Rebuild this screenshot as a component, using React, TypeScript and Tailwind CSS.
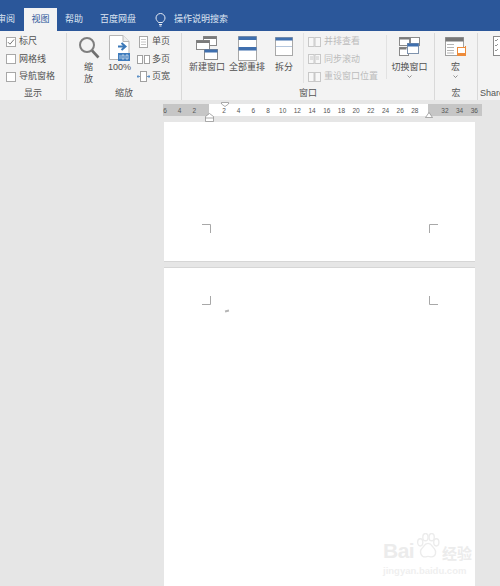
const font = { fontFamily: '"Liberation Sans","Noto Sans CJK SC",sans-serif' };

function Check({ label, checked }: { label: string; checked?: boolean }) {
  return (
    <div className="flex items-center gap-[3px] h-[17.5px]">
      <span className="w-[10px] h-[10px] border border-[#a8a8a8] bg-white flex items-center justify-center">
        {checked && (
          <svg width="8" height="8" viewBox="0 0 8 8" fill="none" stroke="#666" strokeWidth="0.9">
            <path d="M1 4.2 3 6.2 7 1.5" />
          </svg>
        )}
      </span>
      <span className="whitespace-nowrap">{label}</span>
    </div>
  );
}

function Magnifier() {
  return (
    <svg width="22" height="24" viewBox="0 0 22 24" fill="none">
      <circle cx="9" cy="9" r="7" stroke="#7f7f7f" strokeWidth="2" />
      <path d="M14 14.5 20.5 21.5" stroke="#6f6f6f" strokeWidth="2.6" />
    </svg>
  );
}

function Hundred() {
  return (
    <svg width="21" height="27" viewBox="0 0 21 27" fill="none">
      <path d="M.5.5H14L20 6.5V24.5H.5Z" fill="#fff" stroke="#b5b5b5" />
      <path d="M14 .5V6.5H20" fill="#eee" stroke="#b5b5b5" />
      <path d="M9 11.5H15M12.5 8 16.5 11.5 12.5 15" stroke="#3b78b8" strokeWidth="2" />
      <rect x="9" y="18" width="12" height="8" fill="#3f7cbd" />
      <path d="M11 20v4M13 20h2v4h-2zM17 20h2v4h-2z" stroke="#fff" strokeWidth=".6" />
    </svg>
  );
}

function SmallPage() {
  return (
    <svg width="11" height="12" viewBox="0 0 11 12" fill="none" stroke="#a8a8a8">
      <rect x="1.5" y=".5" width="8" height="11" fill="#fff" />
      <path d="M3 3.5h5M3 6h5M3 8.5h5" stroke="#c8c8c8" />
    </svg>
  );
}

function MultiPage() {
  return (
    <svg width="13" height="10" viewBox="0 0 13 10" fill="none" stroke="#a0a0a0">
      <rect x=".5" y="1.5" width="5" height="8" fill="#fff" />
      <rect x="7.5" y="1.5" width="5" height="8" fill="#fff" />
    </svg>
  );
}

function PageWidth() {
  return (
    <svg width="13" height="11" viewBox="0 0 13 11" fill="none">
      <rect x="3.5" y=".5" width="6" height="10" fill="#fff" stroke="#a0a0a0" />
      <path d="M0 5.5h3M10 5.5h3M1.5 4 0 5.5 1.500 7M11.500 4 13 5.500 11.500 7" stroke="#3f7cbd" strokeWidth=".8" />
    </svg>
  );
}

function NewWindow() {
  return (
    <svg width="22" height="24" viewBox="0 0 22 24" fill="none">
      <rect x="7.5" y=".5" width="13" height="9" fill="#fff" stroke="#8a8a8a" />
      <rect x="7.5" y=".5" width="13" height="2.500" fill="#7b7b7b" />
      <rect x=".5" y="4.500" width="13" height="9" fill="#fff" stroke="#8a8a8a" />
      <rect x=".5" y="4.500" width="13" height="2.500" fill="#7b7b7b" />
      <rect x="8.500" y="13.500" width="13" height="10" fill="#fff" stroke="#8a8a8a" />
      <rect x="8.500" y="13.500" width="13" height="3" fill="#3f6fae" />
    </svg>
  );
}

function ArrangeAll() {
  return (
    <svg width="19" height="25" viewBox="0 0 19 25" fill="none">
      <rect x=".5" y=".5" width="18" height="24" fill="#fff" stroke="#a8a8a8" />
      <rect x=".5" y=".5" width="18" height="3.500" fill="#3f6fae" />
      <rect x=".5" y="11" width="18" height="3.500" fill="#3f6fae" />
    </svg>
  );
}

function Split() {
  return (
    <svg width="18" height="19" viewBox="0 0 18 19" fill="none">
      <rect x=".5" y=".5" width="17" height="18" fill="#fff" stroke="#a8a8a8" />
      <rect x=".5" y=".5" width="17" height="3" fill="#3f6fae" />
      <path d="M1 9.500h16" stroke="#b5c7de" />
    </svg>
  );
}

function Faded({ kind }: { kind: number }) {
  return (
    <svg width="13" height="10" viewBox="0 0 13 10" fill="none" stroke="#c8c8c8">
      <rect x=".5" y=".5" width="5.500" height="9" fill="#f7f7f7" />
      <rect x="7" y=".5" width="5.500" height="9" fill="#f7f7f7" />
      {kind === 1 && <path d="M2 3h3M2 5h3M8 3h3M8 5h3" />}
      {kind === 2 && <path d="M6.500 0v10" />}
    </svg>
  );
}

function SwitchWindow() {
  return (
    <svg width="21" height="19" viewBox="0 0 21 19" fill="none">
      <rect x=".5" y=".5" width="10" height="8" fill="#fff" stroke="#8a8a8a" />
      <rect x="11.500" y=".5" width="9" height="8" fill="#fff" stroke="#8a8a8a" />
      <rect x=".5" y="10.500" width="9" height="8" fill="#fff" stroke="#8a8a8a" />
      <rect x="8.500" y="6.500" width="11" height="10" fill="#fff" stroke="#7f93ad" />
      <rect x="8.500" y="6.500" width="11" height="3" fill="#3f6fae" />
      <rect x=".5" y=".5" width="10" height="2" fill="#7b7b7b" />
      <rect x=".5" y="10.500" width="7" height="2" fill="#7b7b7b" />
    </svg>
  );
}

function Macro() {
  return (
    <svg width="22" height="21" viewBox="0 0 22 21" fill="none">
      <rect x=".5" y=".5" width="18" height="18" fill="#fff" stroke="#a0a0a0" />
      <rect x=".5" y=".5" width="18" height="4" fill="#777" />
      <path d="M2 7.500h7M2 10.500h7M2 13.500h7M2 16h7" stroke="#b5b5b5" />
      <rect x="12.500" y="10.500" width="8" height="8" fill="#fff" stroke="#ed8b3a" />
      <rect x="13" y="16" width="7" height="3" fill="#ed8b3a" />
      <path d="M20.500 10v-1" stroke="#ed8b3a" />
    </svg>
  );
}

function Share() {
  return (
    <svg width="10" height="20" viewBox="0 0 10 20" fill="none">
      <rect x=".5" y=".5" width="14" height="19" fill="#fff" stroke="#8a8a8a" />
      <path d="M2 4l1 1 2-2M2 9l1 1 2-2M2 14l1 1 2-2" stroke="#666" strokeWidth=".7" />
    </svg>
  );
}

const Chevron = () => (
  <svg width="5" height="3" viewBox="0 0 5 3" fill="none" stroke="#666" strokeWidth=".7">
    <path d="M.5.5 2.500 2.500 4.500.5" />
  </svg>
);

function Group({ w, label, children }: { w: string; label: string; children: React.ReactNode }) {
  return (
    <div className={`${w} shrink-0 h-[67px] flex flex-col border-r border-[#d9d9d9]`}>
      <div className="flex-1 min-h-0 flex">{children}</div>
      <div className="h-[13px] text-center leading-[13px] text-[#555]">{label}</div>
    </div>
  );
}

const Big = ({ w, icon, label, top = "pt-[3px]", gap = "h-[34px]" }: { w: string; icon: React.ReactNode; label: React.ReactNode; top?: string; gap?: string }) => (
  <div className={`${w} shrink-0 flex flex-col items-center ${top}`}>
    <div className={`${gap} flex items-start justify-center`}>{icon}</div>
    <div className="text-center leading-[11px] whitespace-nowrap">{label}</div>
  </div>
);

const Ticks = ({ items }: { items: number[] }) => (
  <>
    {items.map((n) => (
      <span key={n} className="w-[14.7px] shrink-0 text-center">
        {n}
      </span>
    ))}
  </>
);

function Corner({ d }: { d: string }) {
  return (
    <svg width="9" height="9" viewBox="0 0 9 9" fill="none" stroke="#a8a8a8" strokeWidth="1">
      <path d={d} />
    </svg>
  );
}

export default function App() {
  return (
    <div style={font} className="w-[500px] h-[586px] overflow-hidden bg-[#e6e6e6] text-[9px] text-[#505050] relative flex flex-col">
      <div className="h-[31px] shrink-0 bg-[#2b579a] flex items-end text-[#dfe6f2] overflow-hidden">
        <div className="w-[24px] shrink-0 h-[23px] flex items-center justify-end pr-[9px] overflow-hidden whitespace-nowrap">审阅</div>
        <div className="w-[33px] shrink-0 h-[23px] bg-[#f3f3f3] text-[#2b579a] flex items-center justify-center">视图</div>
        <div className="ml-[8px] w-[19px] h-[23px] flex items-center">帮助</div>
        <div className="ml-[16px] w-[37px] h-[23px] flex items-center whitespace-nowrap">百度网盘</div>
        <div className="ml-[18px] h-[23px] flex items-center">
          <svg width="11" height="14" viewBox="0 0 11 14" fill="none" stroke="#e4eaf4" strokeWidth="1">
            <path d="M3.500 9.500C2.500 8 1 7.200 1 5a4.500 4.500 0 0 1 9 0c0 2.200-1.500 3-2.500 4.500Z" />
            <path d="M4 11.500h3M4.500 13h2" />
          </svg>
        </div>
        <div className="ml-[8px] h-[23px] flex items-center whitespace-nowrap">操作说明搜索</div>
      </div>

      <div className="h-[69px] shrink-0 bg-[#f3f3f3] flex pt-[2px] overflow-hidden">
        <Group w="w-[67px]" label="显示">
          <div className="pl-[6px]">
            <Check label="标尺" checked />
            <Check label="网格线" />
            <Check label="导航窗格" />
          </div>
        </Group>
        <Group w="w-[115px]" label="缩放">
          <Big w="w-[35px] ml-[4px]" icon={<Magnifier />} label={<>缩<br /><span className="inline-block mt-[1px]">放</span></>} top="pt-[3px]" gap="h-[26px]" />
          <Big w="w-[27px]" icon={<Hundred />} label="100%" top="pt-[2px]" gap="h-[27px]" />
          <div className="ml-[3px] flex flex-col">
            {[
              [<SmallPage key="a" />, "单页"],
              [<MultiPage key="b" />, "多页"],
              [<PageWidth key="c" />, "页宽"],
            ].map(([i, t], idx) => (
              <div key={idx} className="h-[17.5px] flex items-center">
                <span className="w-[15px] flex justify-center">{i}</span>
                <span className="ml-[1px]">{t}</span>
              </div>
            ))}
          </div>
        </Group>
        <Group w="w-[253px]" label="窗口">
          <Big w="w-[40px] ml-[5px]" icon={<NewWindow />} label="新建窗口" top="pt-[3px]" gap="h-[26px]" />
          <Big w="w-[40px]" icon={<ArrangeAll />} label="全部重排" top="pt-[3px]" gap="h-[26px]" />
          <Big w="w-[34px]" icon={<Split />} label="拆分" top="pt-[4px]" gap="h-[25px]" />
          <div className="ml-[2px] w-[83px] text-[#bcbcbc] border-l border-[#e2e2e2] pl-[4px] h-[50px] shrink-0">
            {["并排查看", "同步滚动", "重设窗口位置"].map((t, i) => (
              <div key={t} className="h-[17.5px] flex items-center gap-[3px] whitespace-nowrap">
                <Faded kind={i} />
                {t}
              </div>
            ))}
          </div>
          <div className="w-[1px] h-[44px] bg-[#e2e2e2] mt-[2px] shrink-0" />
          <Big w="w-[45px]" icon={<SwitchWindow />} label={<>切换窗口<div className="flex justify-center mt-[2px]"><Chevron /></div></>} top="pt-[4px]" gap="h-[25px]" />
        </Group>
        <Group w="w-[43px]" label="宏">
          <Big w="w-[41px]" icon={<Macro />} label={<>宏<div className="flex justify-center mt-[2px]"><Chevron /></div></>} top="pt-[4px]" gap="h-[25px]" />
        </Group>
        <div className="flex-1 min-w-0 h-[67px] flex flex-col pl-[2px]">
          <div className="flex-1 pl-[13px] pt-[3px]">
            <Share />
          </div>
          <div className="h-[13px] leading-[13px] text-[#555] whitespace-nowrap">Share</div>
        </div>
      </div>

      <div className="flex-1 min-h-0 flex flex-col pt-[4px]">
        <div className="ml-[163px] w-[315px] h-[12px] shrink-0 flex text-[6.500px] leading-[13px] text-[#555]">
          <div className="w-[46px] shrink-0 bg-[#c6c6c6] flex justify-end pr-[7.300px]">
            <Ticks items={[6, 4, 2]} />
          </div>
          <div className="w-[219px] shrink-0 bg-white flex pl-[7.600px]">
            <Ticks items={[2, 4, 6, 8, 10, 12, 14, 16, 18, 20, 22, 24, 26, 28]} />
          </div>
          <div className="flex-1 bg-[#c6c6c6] flex pl-[9.600px] whitespace-nowrap">
            <Ticks items={[32, 34, 36]} />
          </div>
        </div>

        <div className="ml-[164px] w-[311px] flex-1 min-h-0 flex flex-col pt-[6px]">
          <div className="h-[140px] shrink-0 bg-white border-b border-[#d6d6d6] flex items-start justify-between pl-[38px] pr-[37px] pt-[102px]">
            <Corner d="M0 .5H8.500V9" />
            <Corner d="M9 .5H.5V9" />
          </div>
          <div className="h-[5px] shrink-0" />
          <div className="flex-1 min-h-0 bg-white border-t border-[#d6d6d6] pt-[28px]">
            <div className="flex justify-between pl-[38px] pr-[37px]">
              <Corner d="M0 8.500H8.500V0" />
              <Corner d="M9 8.500H.5V0" />
            </div>
            <div className="ml-[61px] mt-[5px] w-[4px] h-[2px] bg-[#b5b5b5] -rotate-12" />
          </div>
        </div>
      </div>

      <svg className="absolute left-[221px] top-[102px]" width="8" height="5" viewBox="0 0 8 5" fill="#fff" stroke="#888" strokeWidth=".7">
        <path d="M.5.5H7.500V2L4 4.500.5 2Z" />
      </svg>
      <svg className="absolute left-[205px] top-[113px]" width="9" height="9" viewBox="0 0 9 9" fill="#fff" stroke="#888" strokeWidth=".7">
        <path d="M.5 8.500V3.500L4.500.5 8.500 3.500V8.500ZM.5 5H8.500" />
      </svg>
      <svg className="absolute left-[425px] top-[112px]" width="8" height="6" viewBox="0 0 8 6" fill="#fff" stroke="#888" strokeWidth=".7">
        <path d="M.5 5.500 4 .5 7.500 5.500Z" />
      </svg>

      <div className="absolute left-[383px] top-[532px] w-[92px] h-[29px] text-[#ececec] flex items-end leading-none">
        <span className="text-[21px] font-bold tracking-tight">Bai</span>
        <svg width="27" height="28" viewBox="0 0 24 27" fill="none" stroke="#ececec" strokeWidth="1.300" className="shrink-0">
          <ellipse cx="5" cy="9" rx="2.500" ry="3.500" />
          <ellipse cx="10" cy="4" rx="2.500" ry="3.500" />
          <ellipse cx="16" cy="4" rx="2.500" ry="3.500" />
          <ellipse cx="20.500" cy="9" rx="2.500" ry="3.500" />
          <path d="M12.500 10c-3.500 0-4 3-6 5-2.500 2.500-1 8 3 8 1.500 0 2-.5 3-.5s2 .5 3.500.5c4 0 5-5 2.500-8-2-2-2.500-5-6-5Z" />
        </svg>
        <span className="text-[15px] font-bold ml-[1px] whitespace-nowrap">经验</span>
      </div>
      <div className="absolute left-[383px] top-[564px] text-[9.500px] font-bold text-[#efefef] whitespace-nowrap">jingyan.baidu.com</div>
    </div>
  );
}
